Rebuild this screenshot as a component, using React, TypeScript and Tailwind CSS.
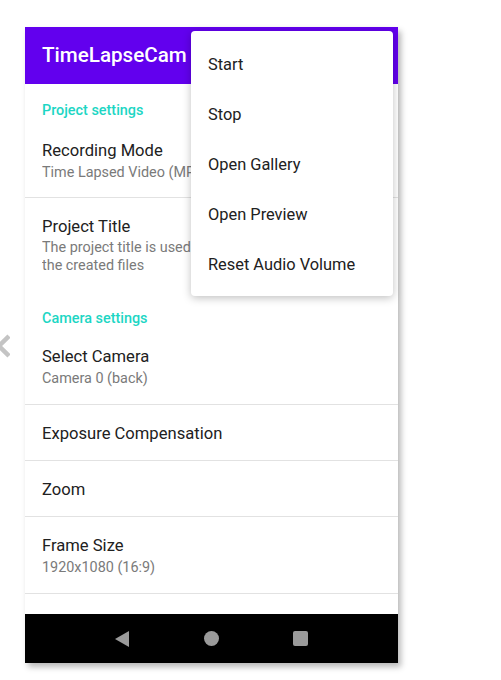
import { ReactNode } from 'react';

const menuItems = ['Start', 'Stop', 'Open Gallery', 'Open Preview', 'Reset Audio Volume'];

const Category = ({ children, className }: { children: ReactNode; className: string }) => (
  <div className={`pl-[17px] text-[14.4px] leading-5 font-medium text-[#1dd6c4] ${className}`}>{children}</div>
);

const Divider = () => <div className="h-px bg-[#e2e2e2]" />;

export default function App() {
  return (
    <div className="relative w-[501px] h-[680px] bg-white overflow-hidden" style={{ fontFamily: 'Roboto, "Noto Sans", sans-serif' }}>
      {/* side chevron, cut off by the window edge */}
      <svg className="absolute left-0 top-[334px]" width="10" height="24" viewBox="0 0 10 24">
        <path d="M9 2 L-1 12 L9 22" fill="none" stroke="#c4c4c4" strokeWidth="4.5" />
      </svg>

      <div className="relative ml-[25px] mt-[27px] w-[373px] h-[636px] flex flex-col bg-white shadow-[3px_4px_6px_rgba(0,0,0,0.28)]">
        <div className="h-[57px] bg-[#6200ee] flex items-center pl-[17px] text-white text-[20.6px] font-medium">
          TimeLapseCam
        </div>

        <div className="flex-1 flex flex-col text-[#212121]">
          <Category className="pt-[17px]">Project settings</Category>
          <div className="pl-[17px] pt-[18px] pb-[14px] whitespace-nowrap">
            <div className="text-[16.6px] leading-6">Recording Mode</div>
            {/* the open menu hides the rest of this line */}
            <div className="w-[149px] overflow-hidden text-[14.4px] leading-5 text-[#7a7a7a]">Time Lapsed Video (MPEG-4)</div>
          </div>
          <Divider />
          <div className="pl-[17px] pt-[17px] pb-[16px]">
            <div className="text-[16.6px] leading-6">Project Title</div>
            <div className="w-[149px] overflow-hidden text-[14.4px] leading-[18px] text-[#7a7a7a] whitespace-nowrap">
              The project title is used as a prefix for
              <br />
              the created files
            </div>
          </div>
          <Category className="pt-[18px]">Camera settings</Category>
          <div className="pl-[17px] pt-[16px] pb-[15px]">
            <div className="text-[16.6px] leading-6">Select Camera</div>
            <div className="text-[14.4px] leading-5 text-[#7a7a7a]">Camera 0 (back)</div>
          </div>
          <Divider />
          <div className="h-[55px] pl-[17px] pt-[3px] flex items-center text-[16.6px]">Exposure Compensation</div>
          <Divider />
          <div className="h-[55px] pl-[17px] pt-[3px] flex items-center text-[16.6px]">Zoom</div>
          <Divider />
          <div className="pl-[17px] pt-[17px] pb-[15px]">
            <div className="text-[16.6px] leading-6">Frame Size</div>
            <div className="text-[14.4px] leading-5 text-[#7a7a7a]">1920x1080 (16:9)</div>
          </div>
          <Divider />
        </div>

        <div className="h-[49px] bg-black flex items-center">
          <svg className="absolute left-[89px]" width="16" height="18" viewBox="0 0 16 18">
            <path d="M15 1 L15 17 L1 9 Z" fill="#9a9a9a" />
          </svg>
          <div className="absolute left-[179px] w-[15px] h-[15px] rounded-full bg-[#9a9a9a]" />
          <div className="absolute left-[268px] w-[15px] h-[15px] rounded-[2px] bg-[#9a9a9a]" />
        </div>

        {/* overflow menu */}
        <div className="absolute left-[166px] top-[4px] w-[202px] pt-[9px] pb-[6px] bg-white rounded-[4px] shadow-[0_2px_8px_rgba(0,0,0,0.25)]">
          {menuItems.map(item => (
            <div key={item} className="h-[50px] flex items-center pl-[17px] text-[16.4px] text-[#212121]">
              {item}
            </div>
          ))}
        </div>
      </div>
    </div>
  );
}
